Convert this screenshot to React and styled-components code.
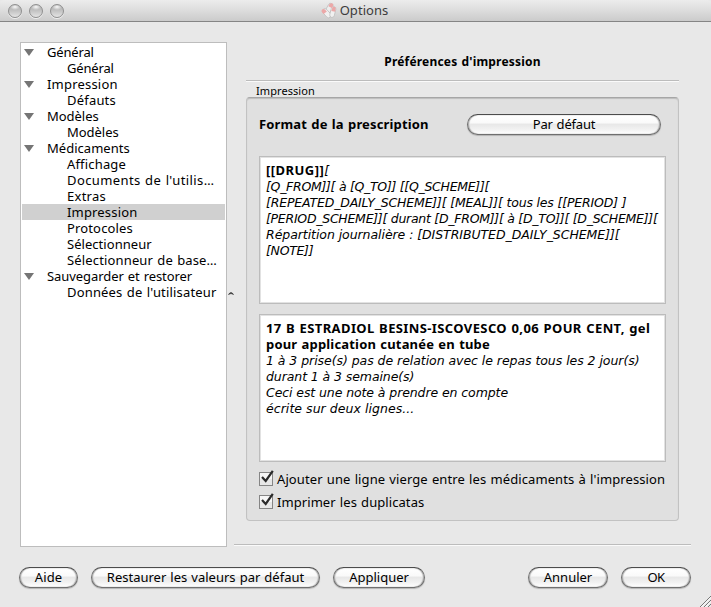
import React from "react";
import styled, { createGlobalStyle } from "styled-components";

const GlobalStyle = createGlobalStyle`
  * { box-sizing: border-box; }
  body { margin: 0; background: #e8e8e8; color: #000; font: 13px/16px "Noto Sans", sans-serif; }
`;

const Window = styled.div`
  position: relative;
  display: flex;
  flex-direction: column;
  width: 711px;
  height: 607px;
  overflow: hidden;
  background: #e8e8e8;
`;

const TitleBar = styled.header`
  flex: none;
  display: grid;
  grid-template-columns: 1fr auto 1fr;
  align-items: center;
  height: 22px;
  padding: 0 7px 0 8px;
  border-bottom: 1px solid #858585;
  border-radius: 4px 4px 0 0;
  background: linear-gradient(#ececec, #dedede 45%, #cbcbcb);
`;

const Lights = styled.div`
  display: flex;
  gap: 7px;
`;

const Light = styled.span`
  width: 14px;
  height: 14px;
  border: 1px solid #8f8f8f;
  border-radius: 50%;
  background: radial-gradient(ellipse 5px 3px at 50% 16%, #fafafa 0, #e2e2e200 100%), linear-gradient(#acacac, #c4c4c4 50%, #e4e4e4);
  box-shadow: 0 1px 0 #eeeeee;
`;

const WindowTitle = styled.div`
  display: flex;
  align-items: center;
  gap: 3px;
  margin-top: -1px;
  padding-right: 4px;
  color: #3c3c3c;
`;

const Text = styled.span`
  display: block;
  white-space: pre;
  word-spacing: 0.7px;
  letter-spacing: ${(p) => p.$track || 0}px;
`;

const Content = styled.main`
  flex: none;
  display: flex;
  gap: 7px;
  height: 525px;
  padding: 20px 20px 0 20px;
`;

const Tree = styled.nav`
  flex: none;
  width: 207px;
  height: 505px;
  padding: 1px;
  border: 1px solid #bdbdbd;
  background: #fff;
`;

const TreeRow = styled.div`
  position: relative;
  display: flex;
  align-items: center;
  height: 16px;
  padding-left: ${(p) => (p.$child ? 45 : 2)}px;
  gap: 13px;
  background: ${(p) => (p.$selected ? "#d0d0d0" : "transparent")};
`;

const Triangle = styled.span`
  width: 0;
  border: 5px solid transparent;
  border-top: 7px solid #757575;
  border-bottom: 0;
  margin-top: 1px;
`;

const Caret = styled.svg`
  position: absolute;
  left: 206px;
  top: 7px;
`;

const Page = styled.section`
  display: flex;
  flex-direction: column;
  width: 457px;
  padding: 0 12px;
`;

const Rule = styled.hr`
  flex: none;
  height: 2px;
  margin: ${(p) => p.$margin || 0};
  border: 0;
  background: linear-gradient(#bcbcbc 50%, #fafafa 50%);
`;

const PageTitle = styled.h1`
  display: flex;
  justify-content: center;
  margin: 12px 0 0;
  padding-bottom: 10px;
  font: bold 12px/16px "Noto Sans", sans-serif;
`;

const GroupLabel = styled.div`
  height: 15px;
  padding-left: 10px;
  font-size: 11px;
  line-height: 18px;
`;

const Group = styled.section`
  display: flex;
  flex-direction: column;
  height: 424px;
  padding: 0 12px;
  border: 1px solid #c2c2c2;
  border-top-color: #a6a6a6;
  border-radius: 4px;
  background: #e0e0e0;
  box-shadow: inset 0 1px 1px #bdbdbd;
`;

const FormatRow = styled.div`
  display: flex;
  justify-content: space-between;
  align-items: center;
  height: 52px;
  padding: 0 5px 0 0;
  font-weight: bold;
`;

const Button = styled.button`
  display: flex;
  justify-content: center;
  width: ${(p) => p.$width}px;
  height: 21px;
  padding: 1px 0 0;
  border: 1px solid #6f6f6f;
  border-top-color: #4c4c4c;
  border-radius: 11px;
  color: #000;
  font: 13px/17px "Noto Sans", sans-serif;
  background: linear-gradient(#fff 0, #fafafa 40%, #e8e8e8 50%, #f1f1f1 75%, #fff);
  box-shadow: inset 1px 0 1px #aaa, inset -1px 0 1px #aaa, 0 1px 1px #b4b4b4;
`;

const TextBox = styled.div`
  height: 148px;
  margin: ${(p) => p.$margin || 0};
  padding: 5px 4px 5px 6px;
  border: 1px solid #bcbcbc;
  background: #fff;
  box-shadow: inset 0 0 0 1px #e2e2e2;
  font-weight: bold;
`;

const Line = styled.div`
  display: flex;
  height: 16px;
`;

const Oblique = styled(Text)`
  font: oblique 12.5px/18px "DejaVu Sans", sans-serif;
  word-spacing: 0;
`;

const CheckRow = styled.label`
  display: flex;
  align-items: center;
  gap: 2px;
  height: 23px;
`;

const Footer = styled.footer`
  display: flex;
  justify-content: space-between;
  padding: 20px 20px 0 19px;
`;

const ButtonGroup = styled.div`
  display: flex;
  gap: 13px;
`;

const Grip = styled.svg`
  position: absolute;
  right: 0;
  bottom: 0;
`;

const tree = [
  ["Général", -0.17],
  ["Général", -0.17, true],
  ["Impression", 0.2],
  ["Défauts", 0.2, true],
  ["Modèles", -0.03],
  ["Modèles", -0.03, true],
  ["Médicaments", 0.03],
  ["Affichage", 0.17, true],
  ["Documents de l'utilis…", 0.39, true],
  ["Extras", 0.26, true],
  ["Impression", 0.17, true, true],
  ["Protocoles", 0.146, true],
  ["Sélectionneur", 0.04, true],
  ["Sélectionneur de base…", 0.15, true],
  ["Sauvegarder et restorer", -0.07],
  ["Données de l'utilisateur", 0.17, true],
];

const template = [
  ["[Q_FROM]][ à [Q_TO]] [[Q_SCHEME]][", -0.29],
  ["[REPEATED_DAILY_SCHEME]][ [MEAL]][ tous les [[PERIOD] ]", -0.17],
  ["[PERIOD_SCHEME]][ durant [D_FROM]][ à [D_TO]][ [D_SCHEME]][", -0.27],
  ["Répartition journalière : [DISTRIBUTED_DAILY_SCHEME]][", -0.06],
  ["[NOTE]]", -0.3],
];

const preview = [
  ["1 à 3 prise(s) pas de relation avec le repas tous les 2 jour(s)", -0.05],
  ["durant 1 à 3 semaine(s)", -0.09],
  ["Ceci est une note à prendre en compte", -0.09],
  ["écrite sur deux lignes...", 0.05],
];

function PillIcon() {
  return (
    <svg width="17" height="17" viewBox="0 0 17 17">
      <g stroke="#b5b5b5" strokeWidth="0.6">
        <rect x="7" y="1" width="5" height="10" rx="2.5" fill="#eee" transform="rotate(28 9.5 6)" />
        <rect x="4" y="6" width="5" height="10.5" rx="2.5" fill="#f0f0f0" transform="rotate(-42 6.5 11)" />
        <rect x="10.5" y="4.5" width="4.6" height="11" rx="2.3" fill="#f0f0f0" transform="rotate(14 12.8 10)" />
      </g>
      <g fill="#eca8a8">
        <path d="M9.5 2Q12.5 0.5 13.2 2.5Q13.3 4.3 11.8 6L8.3 4.2Z" />
        <path d="M1.8 8Q3.4 6.3 5 7.5L6.8 9.6L3.6 12Q0.8 9.5 1.8 8Z" />
        <path d="M12.3 5.4Q14.5 3.9 15.7 6L15.2 9.8L11.4 9Z" />
      </g>
    </svg>
  );
}

function CheckBox() {
  return (
    <svg width="16" height="18" viewBox="0 0 16 18">
      <rect x="0.5" y="2.5" width="13" height="13" fill="#f6f6f6" stroke="#858585" />
      <path d="M1 9h12v6H1z" fill="#e7e7e7" />
      <path d="M3 7L6.7 11L13.8 0.8" fill="none" stroke="#2a2a2a" strokeWidth="2.2" />
    </svg>
  );
}

export default function App() {
  return (
    <Window>
      <GlobalStyle />
      <TitleBar>
        <Lights><Light /><Light /><Light /></Lights>
        <WindowTitle><PillIcon /><Text $track={0.05}>Options</Text></WindowTitle>
      </TitleBar>
      <Content>
        <Tree>
          {tree.map(([label, track, child, selected], i) => (
            <TreeRow key={i} $child={child} $selected={selected}>
              {!child && <Triangle />}
              <Text $track={track}>{label}</Text>
              {i === tree.length - 1 && (
                <Caret width="6" height="4"><path d="M0.5 3.5Q3-0.5 5.5 3.5L3 2.5z" fill="#333" stroke="#333" strokeWidth="0.6" /></Caret>
              )}
            </TreeRow>
          ))}
        </Tree>
        <div>
          <Page>
            <PageTitle><Text $track={0.2}>Préférences d'impression</Text></PageTitle>
            <Rule />
            <GroupLabel><Text $track={0.07}>Impression</Text></GroupLabel>
            <Group>
              <FormatRow>
                <Text $track={0.151}>Format de la prescription</Text>
                <Button $width={194}><Text $track={-0.19}>Par défaut</Text></Button>
              </FormatRow>
              <TextBox $margin="6px 0 10px">
                <Line><Text $track={0.472}>[[DRUG]]</Text><Oblique>[</Oblique></Line>
                {template.map(([t, k]) => <Line key={t}><Oblique $track={k}>{t}</Oblique></Line>)}
              </TextBox>
              <TextBox $margin="0 0 5px">
                <Line><Text $track={0.385}>17 B ESTRADIOL BESINS-ISCOVESCO 0,06 POUR CENT, gel</Text></Line>
                <Line><Text $track={0.175}>pour application cutanée en tube</Text></Line>
                {preview.map(([t, k]) => <Line key={t}><Oblique $track={k}>{t}</Oblique></Line>)}
              </TextBox>
              <CheckRow><CheckBox /><Text $track={0.094}>Ajouter une ligne vierge entre les médicaments à l'impression</Text></CheckRow>
              <CheckRow><CheckBox /><Text $track={0.07}>Imprimer les duplicatas</Text></CheckRow>
            </Group>
          </Page>
          <Rule $margin="23px 0 0" />
        </div>
      </Content>
      <Footer>
        <ButtonGroup>
          <Button $width={59}><Text $track={0.115}>Aide</Text></Button>
          <Button $width={229}><Text>Restaurer les valeurs par défaut</Text></Button>
          <Button $width={92}><Text>Appliquer</Text></Button>
        </ButtonGroup>
        <ButtonGroup>
          <Button $width={80}><Text>Annuler</Text></Button>
          <Button $width={70}><Text $track={-0.5}>OK</Text></Button>
        </ButtonGroup>
      </Footer>
      <Grip width="12" height="12">
        <path d="M1 12L12 1M5 12L12 5M9 12L12 9" stroke="#777" />
        <path d="M2.4 12L12 2.4M6.4 12L12 6.4" stroke="#fff" />
      </Grip>
    </Window>
  );
}
